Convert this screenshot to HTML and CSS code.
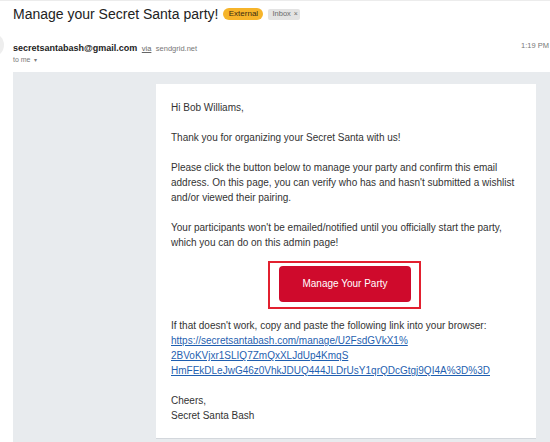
FILE: index.html
```html
<!DOCTYPE html>
<html lang="en">
<head>
<meta charset="utf-8">
<title>Manage your Secret Santa party!</title>
<link rel="stylesheet" href="styles.css">
</head>
<body>
<header class="mail-head">
  <div class="subject-row">
    <h1 class="subject">Manage your Secret Santa party!</h1>
    <span class="chip chip-external">External</span>
    <span class="chip chip-inbox">Inbox <span class="chip-x">×</span></span>
  </div>
  <div class="sender-row">
    <div class="avatar"></div>
    <div class="sender-info">
      <div class="sender-line"><span class="sender-email">secretsantabash@gmail.com</span> <span class="via">via</span> <span class="relay">sendgrid.net</span></div>
      <div class="to-line">to me <span class="caret">▾</span></div>
    </div>
    <div class="time">1:19 PM</div>
  </div>
</header>
<main class="mail-body">
  <div class="card">
    <p>Hi Bob Williams,</p>
    <p>Thank you for organizing your Secret Santa with us!</p>
    <p>Please click the button below to manage your party and confirm this email address. On this page, you can verify who has and hasn't submitted a wishlist and/or viewed their pairing.</p>
    <p>Your participants won't be emailed/notified until you officially start the party, which you can do on this admin page!</p>
    <div class="cta-wrap">
      <div class="cta-outline"><a class="cta" href="#">Manage Your Party</a></div>
    </div>
    <p>If that doesn't work, copy and paste the following link into your browser:<br><a class="link" href="#">https://secretsantabash.com/manage/U2FsdGVkX1%<br>2BVoKVjxr1SLIQ7ZmQxXLJdUp4KmqS<br>HmFEkDLeJwG46z0VhkJDUQ444JLDrUsY1qrQDcGtgj9QI4A%3D%3D</a></p>
    <p class="last">Cheers,<br>Secret Santa Bash</p>
  </div>
</main>
</body>
</html>
```
FILE: styles.css
```css
html, body {
  margin: 0;
  padding: 0;
  background: #ffffff;
  overflow: hidden;
}
body {
  width: 550px;
  height: 442px;
  font-family: "Liberation Sans", Arial, sans-serif;
  border-top: 1px solid #ececec;
  box-sizing: border-box;
}
.mail-head {
  padding: 3px 0 0 0;
}
.subject-row {
  display: flex;
  align-items: center;
  height: 20px;
  padding-left: 13px;
}
.subject {
  margin: 0;
  font-family: "Liberation Sans", Arial, sans-serif;
  font-weight: normal;
  font-size: 14px;
  line-height: 20px;
  color: #222222;
}
.chip {
  display: inline-flex;
  align-items: center;
  height: 12px;
  border-radius: 6px;
  font-size: 7.5px;
  line-height: 12px;
  padding: 0 5px;
}
.chip-external {
  margin-left: 5px;
  width: 40px;
  box-sizing: border-box;
  justify-content: center;
  background: #f6b42a;
  color: #3a2c10;
  font-size: 8px;
}
.chip-inbox {
  margin-left: 5px;
  height: 11px;
  border-radius: 2px;
  background: #e3e3e3;
  color: #6a6a6a;
  padding: 0 4px;
  width: 32px;
  box-sizing: border-box;
}
.chip-x {
  margin-left: 3px;
  font-size: 7px;
}
.sender-row {
  display: flex;
  align-items: flex-start;
  margin-top: 14.5px;
}
.avatar {
  width: 24px;
  height: 24px;
  border-radius: 50%;
  background: #eeeeee;
  margin-left: -20px;
  margin-top: -5.5px;
  flex: none;
}
.sender-info {
  margin-left: 9px;
  flex: 1;
}
.sender-line {
  line-height: 14px;
  height: 14px;
  white-space: nowrap;
}
.sender-email {
  font-weight: bold;
  font-size: 9px;
  color: #222222;
}
.via {
  font-size: 7.5px;
  color: #666666;
  text-decoration: underline;
}
.relay {
  font-size: 7.5px;
  color: #777777;
}
.to-line {
  font-size: 7px;
  line-height: 13px;
  color: #7a7a7a;
}
.caret {
  font-size: 6px;
  margin-left: 2px;
}
.time {
  font-size: 7.5px;
  line-height: 14px;
  color: #777777;
  margin-right: 1px;
  white-space: nowrap;
}
.mail-body {
  margin: 5.5px 0 0 13px;
  background: #e8ebee;
  padding: 12px 0 20px 143px;
}
.card {
  width: 380px;
  box-sizing: border-box;
  background: #ffffff;
  border-bottom: 1px solid #d3d7dc;
  padding: 16px 15px 15px 15px;
  font-size: 10px;
  line-height: 15px;
  color: #333333;
}
.card p {
  margin: 0 0 15px 0;
}
.card p.last {
  margin-bottom: 0;
}
.cta-wrap {
  display: flex;
  justify-content: center;
  margin: -4px 0 9px 0;
  padding-right: 3px;
}
.cta-outline {
  border: 2px solid #e2202f;
  padding: 3px 8px 5px 9px;
}
.cta {
  display: block;
  width: 132px;
  height: 36px;
  line-height: 36px;
  border-radius: 4px;
  background: #cf0a2c;
  color: #ffffff;
  text-align: center;
  text-decoration: none;
  font-size: 10px;
}
.link {
  color: #1f5fb0;
  text-decoration: underline;
}
```
